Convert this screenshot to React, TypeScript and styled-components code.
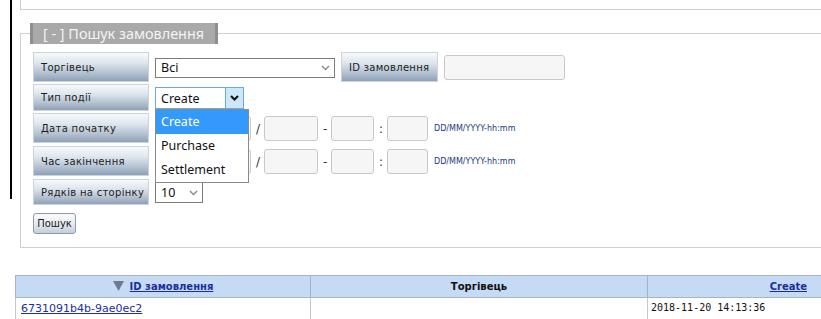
import styled, { createGlobalStyle } from "styled-components";

const GlobalStyle = createGlobalStyle`
  html, body {
    margin: 0;
    padding: 0;
    background: #fff;
    overflow: hidden;
  }
  body {
    font-family: "DejaVu Sans", Verdana, sans-serif;
    color: #222;
  }
`;

const Page = styled.div`
  width: 860px;
  padding-left: 10px;
  box-sizing: border-box;
`;

const Upper = styled.div`
  display: flex;
  align-items: flex-start;
`;

const Rule = styled.div`
  width: 2px;
  height: 199px;
  background: #000;
  flex-shrink: 0;
`;

const Column = styled.div`
  margin-left: 8px;
  width: 830px;
`;

const TopBox = styled.div`
  height: 10px;
  box-sizing: border-box;
  border-left: 1px solid #cfcfcf;
  border-bottom: 1px solid #cfcfcf;
`;

const Fieldset = styled.fieldset`
  margin: 13px 0 0 0;
  padding: 8px 12px 13px 12px;
  border: 1px solid #cfcfcf;
  min-width: 0;
`;

const Legend = styled.legend`
  margin-left: -3px;
  padding: 0 10px 0 10px;
  height: 21px;
  line-height: 21px;
  box-sizing: border-box;
  width: 188px;
  background: #a9a9a9;
  border-left: 3px solid #8e8e8e;
  border-right: 3px solid #8e8e8e;
  color: #f4f4f4;
  font-family: "Noto Sans", "Open Sans", sans-serif;
  font-size: 14.4px;
  white-space: nowrap;
`;

const FormRow = styled.div<{ $gap?: number }>`
  display: flex;
  gap: 6px;
  margin-bottom: ${(p) => p.$gap ?? 2}px;
`;

const FieldLabel = styled.div<{ $w?: number }>`
  width: ${(p) => p.$w ?? 116}px;
  box-sizing: border-box;
  flex-shrink: 0;
  display: flex;
  align-items: center;
  padding-left: 7px;
  border: 1px solid #cdd3da;
  background: linear-gradient(to bottom, #f7f9fb 0%, #dfe6ee 35%, #a9b8ca 80%, #8da1b8 100%);
  font-size: 10px;
  letter-spacing: 0.3px;
  color: #1d1d1d;
  white-space: nowrap;
`;

const Cell = styled.div`
  position: relative;
  display: flex;
  align-items: center;
  gap: 5px;
  padding: 3px 0 2px 0;
`;

const SelectBox = styled.div<{ $w: number; $h: number; $focused?: boolean }>`
  width: ${(p) => p.$w}px;
  height: ${(p) => p.$h}px;
  box-sizing: border-box;
  display: flex;
  align-items: stretch;
  border: 1px solid ${(p) => (p.$focused ? "#6aa9dd" : "#7a7a7a")};
  background: #fff;
  font-family: "Noto Sans", "Open Sans", sans-serif;
  font-size: 12.5px;
  color: #111;
`;

const SelectText = styled.span`
  flex: 1;
  display: flex;
  align-items: center;
  padding-left: 5px;
`;

const Arrow = styled.span<{ $focused?: boolean }>`
  width: 17px;
  display: flex;
  align-items: center;
  justify-content: center;
  background: ${(p) => (p.$focused ? "#cce6fa" : "transparent")};
  border-left: 1px solid ${(p) => (p.$focused ? "#6aa9dd" : "transparent")};
  color: ${(p) => (p.$focused ? "#111" : "#888")};
`;

const Dropdown = styled.ul`
  position: absolute;
  top: 25px;
  left: 0;
  width: 94px;
  margin: 0;
  padding: 0;
  list-style: none;
  background: #fff;
  border: 1px solid #8a8a8a;
  box-sizing: border-box;
  z-index: 5;
  font-family: "Noto Sans", "Open Sans", sans-serif;
  font-size: 12.5px;
`;

const Option = styled.li<{ $active?: boolean }>`
  height: 24px;
  line-height: 24px;
  padding-left: 5px;
  background: ${(p) => (p.$active ? "#3399fa" : "#fff")};
  color: ${(p) => (p.$active ? "#fff" : "#111")};
`;

const TextInput = styled.div<{ $w: number }>`
  width: ${(p) => p.$w}px;
  height: 25px;
  box-sizing: border-box;
  border: 1px solid #c9c9c9;
  border-radius: 3px;
  background: #f6f6f6;
`;

const Sep = styled.span`
  font-size: 12px;
  color: #333;
  width: 3px;
  text-align: center;
`;

const Hint = styled.span`
  margin-left: 1px;
  font-size: 8px;
  color: #22397a;
  white-space: nowrap;
`;

const SearchButton = styled.button`
  margin-top: 6px;
  width: 43px;
  height: 21px;
  padding: 0;
  border: 1px solid #8e9aab;
  border-radius: 3px;
  background: linear-gradient(to bottom, #fbfbfc 0%, #e6ebf0 50%, #c4ceda 100%);
  font-family: "DejaVu Sans", Verdana, sans-serif;
  font-size: 10px;
  color: #1a1a1a;
`;

const Table = styled.table`
  margin: 27px 0 0 5px;
  width: 815px;
  border-collapse: collapse;
  table-layout: fixed;
  font-size: 11px;
`;

const HeadCell = styled.th<{ $align?: string }>`
  height: 21px;
  padding: 0 ${(p) => (p.$align === "right" ? 22 : 4)}px 0 4px;
  background: #c5daf4;
  border: 1px solid #a8b4c4;
  font-size: 10px;
  font-weight: bold;
  text-align: ${(p) => p.$align ?? "center"};
  color: #111;
`;

const HeadLink = styled.a`
  color: #1b2f9c;
  text-decoration: underline;
  svg {
    margin-right: 6px;
    vertical-align: -1px;
  }
`;

const DataCell = styled.td<{ $mono?: boolean }>`
  height: 30px;
  padding: 4px 4px 0 ${(p) => (p.$mono ? 3 : 5)}px;
  border: 1px solid #c3c8cf;
  vertical-align: top;
  box-sizing: border-box;
  font-family: ${(p) => (p.$mono ? '"DejaVu Sans Mono", monospace' : '"DejaVu Sans", Verdana, sans-serif')};
  font-size: ${(p) => (p.$mono ? 10 : 11)}px;
  color: #111;
`;

const RowLink = styled.a`
  color: #1d2ea6;
  text-decoration: underline;
`;

function Chevron({ bold }: { bold?: boolean }) {
  return (
    <svg width="9" height="6" viewBox="0 0 9 6">
      <path d="M1 1 L4.5 4.5 L8 1" fill="none" stroke="currentColor" strokeWidth={bold ? 2 : 1.4} />
    </svg>
  );
}

function DateInputs() {
  return (
    <Cell>
      <TextInput $w={96} />
      <Sep>/</Sep>
      <TextInput $w={54} />
      <Sep>-</Sep>
      <TextInput $w={43} />
      <Sep>:</Sep>
      <TextInput $w={41} />
      <Hint>DD/MM/YYYY-hh:mm</Hint>
    </Cell>
  );
}

export default function App() {
  return (
    <>
      <GlobalStyle />
      <Page>
        <Upper>
          <Rule />
          <Column>
            <TopBox />
            <Fieldset>
              <Legend>[ - ] Пошук замовлення</Legend>

              <FormRow>
                <FieldLabel>Торгівець</FieldLabel>
                <Cell>
                  <SelectBox $w={180} $h={20}>
                    <SelectText>Всі</SelectText>
                    <Arrow>
                      <Chevron />
                    </Arrow>
                  </SelectBox>
                </Cell>
                <FieldLabel $w={97}>ID замовлення</FieldLabel>
                <Cell>
                  <TextInput $w={121} />
                </Cell>
              </FormRow>

              <FormRow>
                <FieldLabel>Тип події</FieldLabel>
                <Cell>
                  <SelectBox $w={89} $h={22} $focused>
                    <SelectText>Create</SelectText>
                    <Arrow $focused>
                      <Chevron bold />
                    </Arrow>
                  </SelectBox>
                  <Dropdown>
                    <Option $active>Create</Option>
                    <Option>Purchase</Option>
                    <Option>Settlement</Option>
                  </Dropdown>
                </Cell>
              </FormRow>

              <FormRow $gap={3}>
                <FieldLabel>Дата початку</FieldLabel>
                <DateInputs />
              </FormRow>

              <FormRow $gap={3}>
                <FieldLabel>Час закінчення</FieldLabel>
                <DateInputs />
              </FormRow>

              <FormRow>
                <FieldLabel>Рядків на сторінку</FieldLabel>
                <Cell>
                  <SelectBox $w={48} $h={21}>
                    <SelectText>10</SelectText>
                    <Arrow>
                      <Chevron />
                    </Arrow>
                  </SelectBox>
                </Cell>
              </FormRow>

              <SearchButton>Пошук</SearchButton>
            </Fieldset>
          </Column>
        </Upper>

        <Table>
          <colgroup>
            <col style={{ width: 295 }} />
            <col style={{ width: 337 }} />
            <col />
          </colgroup>
          <thead>
            <tr>
              <HeadCell>
                <HeadLink>
                  <svg width="11" height="10" viewBox="0 0 11 10">
                    <path d="M0 0 H11 L5.5 10 Z" fill="#6c7c90" />
                  </svg>
                  ID замовлення
                </HeadLink>
              </HeadCell>
              <HeadCell>Торгівець</HeadCell>
              <HeadCell $align="right">
                <HeadLink>Create</HeadLink>
              </HeadCell>
            </tr>
          </thead>
          <tbody>
            <tr>
              <DataCell>
                <RowLink>6731091b4b-9ae0ec2</RowLink>
              </DataCell>
              <DataCell />
              <DataCell $mono>2018-11-20 14:13:36</DataCell>
            </tr>
          </tbody>
        </Table>
      </Page>
    </>
  );
}
